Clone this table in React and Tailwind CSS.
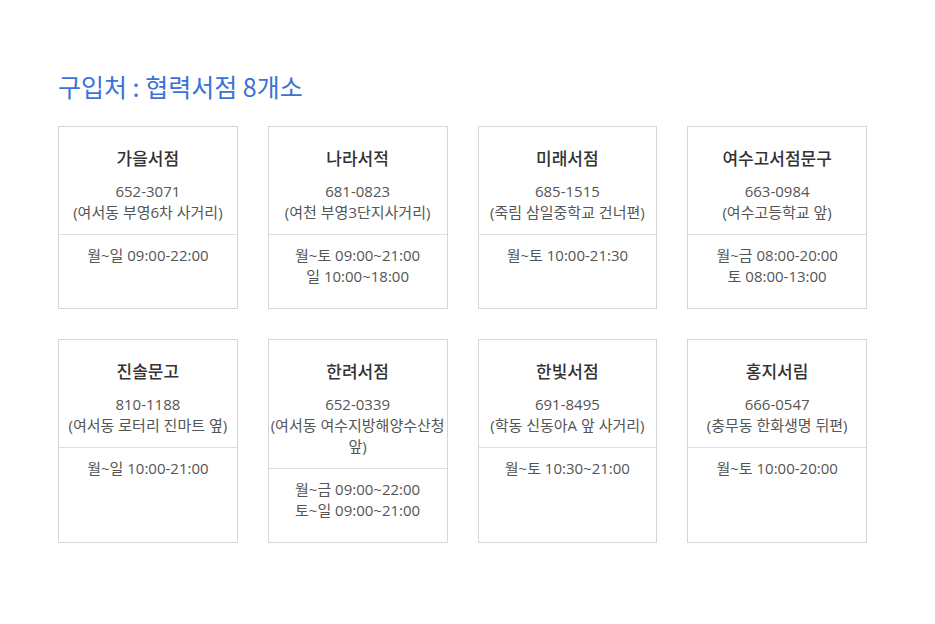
import React from "react";

const stores = [
  { name: "가을서점", phone: "652-3071", addr: "(여서동 부영6차 사거리)", hours: ["월~일 09:00-22:00"] },
  { name: "나라서적", phone: "681-0823", addr: "(여천 부영3단지사거리)", hours: ["월~토 09:00~21:00", "일 10:00~18:00"] },
  { name: "미래서점", phone: "685-1515", addr: "(죽림 삼일중학교 건너편)", hours: ["월~토 10:00-21:30"] },
  { name: "여수고서점문구", phone: "663-0984", addr: "(여수고등학교 앞)", hours: ["월~금 08:00-20:00", "토 08:00-13:00"] },
  { name: "진솔문고", phone: "810-1188", addr: "(여서동 로터리 진마트 옆)", hours: ["월~일 10:00-21:00"] },
  { name: "한려서점", phone: "652-0339", addr: "(여서동 여수지방해양수산청 앞)", hours: ["월~금 09:00~22:00", "토~일 09:00~21:00"] },
  { name: "한빛서점", phone: "691-8495", addr: "(학동 신동아A 앞 사거리)", hours: ["월~토 10:30~21:00"] },
  { name: "홍지서림", phone: "666-0547", addr: "(충무동 한화생명 뒤편)", hours: ["월~토 10:00-20:00"] },
];

function Card({ s }) {
  return (
    <div className="flex flex-col border border-[#d6d6d6] bg-white text-center break-keep">
      <div className="border-b border-[#dedede] pt-[20px] pb-[11px]">
        <div className="text-[17px] leading-[24px] font-medium text-[#333]">{s.name}</div>
        <div className="mt-[10px] text-[15px] leading-[21px] text-[#555]">
          <div>{s.phone}</div>
          <div>{s.addr}</div>
        </div>
      </div>
      <div className="flex-1 pt-[10px] pb-[21px] text-[15px] leading-[21px] text-[#555]">
        {s.hours.map((h, i) => (
          <div key={i}>{h}</div>
        ))}
      </div>
    </div>
  );
}

export default function App() {
  return (
    <div
      className="min-h-[624px] w-[935px] bg-white px-[58px] pt-[70px]"
      style={{ fontFamily: '"Open Sans", "Noto Sans CJK KR", sans-serif' }}
    >
      <h2
        className="text-[25px] leading-[32px] font-normal text-[#3b72d6]"
        style={{ fontFamily: '"Noto Sans CJK KR", sans-serif' }}
      >
        구입처 : 협력서점 8개소
      </h2>
      <div className="mt-[24px] grid w-[809px] grid-cols-4 gap-x-[30px] gap-y-[30px]">
        {stores.map((s) => (
          <Card key={s.name} s={s} />
        ))}
      </div>
    </div>
  );
}
